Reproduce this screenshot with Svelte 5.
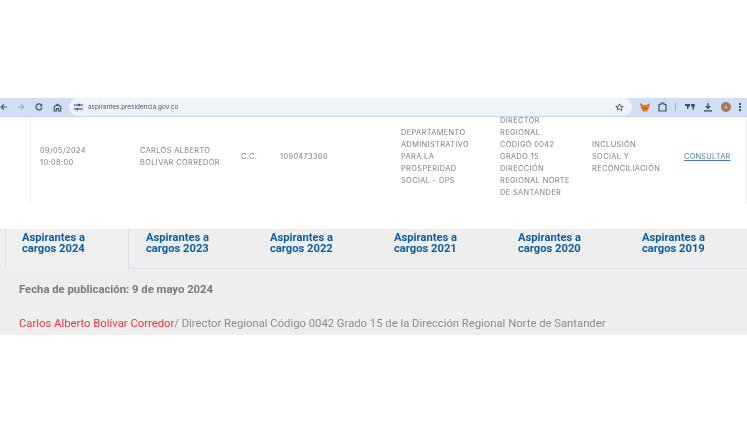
<script>
  const row = [
    ['09/05/2024', '10:08:00'],
    ['CARLOS ALBERTO', 'BOLÍVAR CORREDOR'],
    ['C.C.'],
    ['1090473366'],
    ['DEPARTAMENTO', 'ADMINISTRATIVO', 'PARA LA', 'PROSPERIDAD', 'SOCIAL - DPS'],
    ['DIRECTOR', 'REGIONAL', 'CODIGÓ 0042', 'GRADO 15', 'DIRECCIÓN', 'REGIONAL NORTE', 'DE SANTANDER'],
    ['INCLUSIÓN', 'SOCIAL Y', 'RECONCILIACIÓN']
  ];
  const years = [2024, 2023, 2022, 2021, 2020, 2019];
</script>

<div class="page">
  <div class="browser">
    <div class="nav">
      <svg width="8" height="8" viewBox="0 0 8 8"><path d="M7 4H1.500M4 1.200 1.200 4 4 6.800" fill="none" stroke="#44546a" stroke-width="1.100"/></svg>
      <svg class="forward" width="8" height="8" viewBox="0 0 8 8"><path d="M1 4h5.500M4 1.200 6.800 4 4 6.800" fill="none" stroke="#8d9db0" stroke-width="1"/></svg>
      <svg class="reload" width="8" height="8" viewBox="0 0 8 8"><path d="M6.600 2.400A3 3 0 1 0 7 4.400" fill="none" stroke="#3f4f63" stroke-width="1.200"/><path d="M7.200.8v2.600H4.600z" fill="#3f4f63"/></svg>
      <svg class="home" width="9" height="9" viewBox="0 0 9 9"><path d="M1.200 8V3.800L4.500 1.200l3.300 2.600V8H5.600V5.600H3.400V8z" fill="none" stroke="#3f4f63" stroke-width="1.100"/></svg>
    </div>
    <div class="address">
      <span class="tune">
        <svg width="9" height="8" viewBox="0 0 9 8"><path d="M0 2h4M6 2h3M0 6h2M5 6h4" stroke="#3f4f63" stroke-width="1"/><circle cx="5" cy="2" r="1.200" fill="#3f4f63"/><circle cx="3.400" cy="6" r="1.200" fill="#3f4f63"/></svg>
      </span>
      <span class="url">aspirantes.presidencia.gov.co</span>
      <svg class="star" width="9" height="9" viewBox="0 0 10 10"><path d="m5 1 1.200 2.700 2.900.3-2.200 1.900.7 2.900L5 6.400 2.400 7.800l.7-2.900L.9 4l2.900-.3z" fill="none" stroke="#44505f" stroke-width="1"/></svg>
    </div>
    <div class="tools">
      <svg class="fox" width="10" height="9" viewBox="0 0 10 9"><path d="M0 0l3.500 2h3L10 0 9 5 7 8.500H3L1 5z" fill="#e2761b"/><path d="M3 5.500h1.200M5.800 5.500H7" stroke="#763d16"/></svg>
      <svg class="puzzle" width="9" height="10" viewBox="0 0 9 10"><path d="M1 2.500h2V1h3v1.500h2v6.500H1z" fill="none" stroke="#3f4f63" stroke-width="1.200" stroke-linejoin="round"/></svg>
      <span class="sep"></span>
      <svg class="ext" width="10" height="8" viewBox="0 0 10 8"><path d="M0 1h5v2.500H3.500V6H2V3H0zM6 1h4L8.500 7H7.500V3.500H6z" fill="#3f4f63"/></svg>
      <svg class="down" width="10" height="10" viewBox="0 0 10 10"><path d="M5 1v5M2.800 4 5 6.300 7.200 4M1 8.800h8" fill="none" stroke="#35465c" stroke-width="1.200"/></svg>
      <span class="avatar">A</span>
      <span class="dots"><i></i><i></i><i></i></span>
    </div>
  </div>

  <div class="table-wrap">
    <div class="table-row">
      {#each row as cell}
        <div class="cell">
          {#each cell as line}
            <div>{line}</div>
          {/each}
        </div>
      {/each}
      <a class="cell link" href="#consultar">CONSULTAR</a>
    </div>
  </div>

  <section class="panel">
    <div class="tabs">
      {#each years as year, i}
        <div class="tab" class:active={i === 0}>Aspirantes a<br />cargos {year}</div>
      {/each}
    </div>
    <p class="date">Fecha de publicación: 9 de mayo 2024</p>
    <p class="name"><span class="red">Carlos Alberto Bolívar Corredor</span>/ Director Regional Código 0042 Grado 15 de la Dirección Regional Norte de Santander</p>
  </section>
</div>

<style>
  :global(body) {
    margin: 0;
    background: #fff;
  }

  .page {
    width: 747px;
    height: 427px;
    padding-top: 98px;
    box-sizing: border-box;
    overflow: hidden;
    font-family: "Inter", "Liberation Sans", sans-serif;
    filter: blur(0.45px);
  }

  .browser {
    height: 19px;
    display: flex;
    align-items: center;
    background: #cfe0f5;
    border-bottom: 1px solid #c3d6ec;
    box-sizing: border-box;
  }

  .nav {
    width: 69px;
    flex: none;
    display: flex;
    align-items: center;
    box-sizing: border-box;
  }

  .forward { margin-left: 9px; }
  .reload { margin-left: 10px; }
  .home { margin-left: 10px; }

  .address {
    width: 563px;
    height: 18px;
    flex: none;
    display: flex;
    align-items: center;
    background: #eff4fb;
    border-radius: 9px;
    box-sizing: border-box;
    padding: 0 8px 0 4px;
  }

  .tune {
    width: 11px;
    height: 11px;
    display: flex;
    align-items: center;
    justify-content: center;
    background: #dfe9f5;
    border-radius: 50%;
  }

  .url {
    flex: 1;
    margin-left: 4px;
    font-size: 6.4px;
    color: #4b5563;
  }

  .tools {
    flex: 1;
    display: flex;
    align-items: center;
    padding-left: 8px;
  }

  .puzzle { margin-left: 8px; }

  .sep {
    width: 1px;
    height: 8px;
    background: #9fb0c4;
    margin-left: 8px;
  }

  .ext { margin-left: 9px; }
  .down { margin-left: 8px; }

  .avatar {
    width: 10px;
    height: 10px;
    margin-left: 8px;
    border-radius: 50%;
    background: #a9745f;
    color: #e8d5cb;
    font-size: 5px;
    line-height: 10px;
    text-align: center;
  }

  .dots {
    margin-left: 8px;
    display: flex;
    flex-direction: column;
    gap: 1.5px;
  }

  .dots i {
    width: 1.5px;
    height: 1.5px;
    background: #3f4f63;
  }

  .table-wrap {
    height: 87px;
    margin-left: 30px;
    border-left: 1px solid #f0f0f2;
    border-right: 2px solid #f3f3f5;
    overflow: hidden;
  }

  .table-row {
    margin-top: -2px;
    height: 84px;
    display: grid;
    grid-template-columns: 100px 101px 39px 121px 99px 92px 92px 1fr;
    align-items: center;
    padding-left: 9px;
    font-size: 7.4px;
    line-height: 12px;
    letter-spacing: 0.38px;
    color: #7d7e82;
  }

  .link {
    color: #4c7da8;
    text-decoration: underline;
    letter-spacing: 0.25px;
  }

  .panel {
    margin-top: 25px;
    height: 106px;
    background: #eeeeee;
    font-family: "Roboto", "Liberation Sans", sans-serif;
    overflow: hidden;
  }

  .tabs {
    display: flex;
    height: 39px;
    margin-left: 5px;
    border-bottom: 1px solid #d5e2ee;
  }

  .tab {
    width: 124px;
    flex: none;
    box-sizing: border-box;
    padding: 3px 0 0 17px;
    font-size: 11.2px;
    font-weight: 700;
    line-height: 11px;
    color: #0d5c9f;
  }

  .tab.active {
    height: 40px;
    border-left: 1px solid #d5e2ee;
    border-right: 1px solid #d5e2ee;
    background: #efefef;
    padding-left: 16px;
  }

  .date {
    margin: 14px 0 0 19px;
    font-size: 11.3px;
    font-weight: 700;
    line-height: 13px;
    color: #77797b;
  }

  .name {
    margin: 21px 0 0 19px;
    font-size: 11.27px;
    line-height: 13px;
    color: #8b8c8e;
    white-space: nowrap;
  }

  .red {
    color: #f0333f;
  }
</style>
